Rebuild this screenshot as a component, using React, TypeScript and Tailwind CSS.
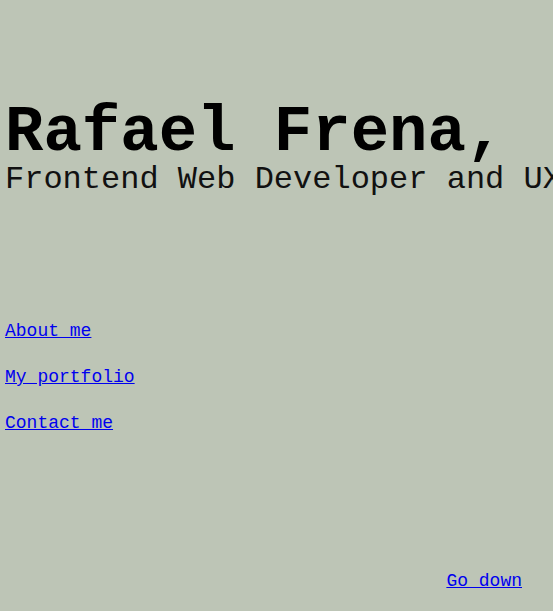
export default function App() {
  const links = ["About me", "My portfolio", "Contact me"];

  return (
    <div className="flex h-[611px] flex-col overflow-hidden bg-[#bdc5b6] font-['Liberation_Mono','Courier_New',monospace]">
      {/* Intro */}
      <header className="whitespace-nowrap pl-[5px] pt-[104px]">
        <h1 className="text-[64px] font-bold leading-[58px] text-black">Rafael Frena,</h1>
        <h2 className="mt-[2px] text-[32px] leading-[32px] text-[#111]">
          Frontend Web Developer and UX Designer
        </h2>
      </header>

      {/* Nav */}
      <nav className="mt-[112px] flex flex-col pl-[5px]">
        {links.map((l) => (
          <a key={l} href="#" className="self-start text-[18px] leading-[46px] text-[#0000ee] underline">
            {l}
          </a>
        ))}
      </nav>

      <a href="#" className="mb-[20px] mr-[31px] mt-auto self-end text-[18px] leading-[20px] text-[#0000ee] underline">
        Go down
      </a>
    </div>
  );
}
